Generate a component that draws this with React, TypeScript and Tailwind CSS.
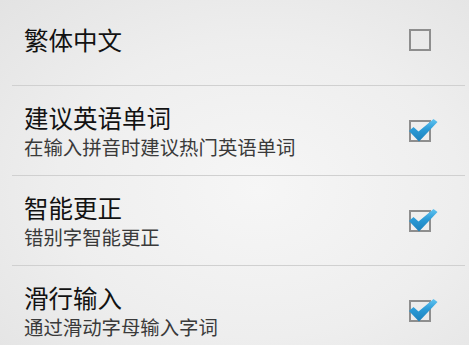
import React from "react";

type Item = { title: string; sub?: string; checked: boolean };

const items: Item[] = [
  { title: "繁体中文", checked: false },
  { title: "建议英语单词", sub: "在输入拼音时建议热门英语单词", checked: true },
  { title: "智能更正", sub: "错别字智能更正", checked: true },
  { title: "滑行输入", sub: "通过滑动字母输入字词", checked: true },
];

function Box({ checked }: { checked: boolean }) {
  return (
    <div className="relative h-[22px] w-[22px] border-2 border-[#8e8e8e]">
      {checked && (
        <svg
          className="absolute left-[-2px] top-[-3px]"
          width="30"
          height="24"
          viewBox="0 0 30 24"
        >
          <defs>
            <linearGradient id="ck" x1="0" y1="0" x2="0" y2="1">
              <stop offset="0" stopColor="#62c4f0" />
              <stop offset="0.45" stopColor="#2b9bd7" />
              <stop offset="1" stopColor="#1c80bb" />
            </linearGradient>
          </defs>
          <path
            d="M0 12 L4.5 8 L9.5 12.5 L24.5 0 L28.5 3 L10 22.5 Z"
            fill="url(#ck)"
          />
        </svg>
      )}
    </div>
  );
}

export default function App() {
  return (
    <div
      className="h-[345px] w-[469px] overflow-hidden bg-[radial-gradient(ellipse_at_55%_55%,#f6f6f6_0%,#eeeeee_55%,#e3e3e3_100%)]"
      style={{ fontFamily: '"Noto Sans CJK SC", "Noto Sans", sans-serif' }}
    >
      <div className="ml-[12px] mr-[4px] flex flex-col">
        {items.map((it, i) => (
          <div
            key={i}
            className={`flex items-center justify-between border-b border-[#d0d0d0] pl-[12px] pr-[34px] ${
              i === 0 ? "h-[86px] pb-[6px]" : "h-[90px]"
            }`}
          >
            <div className="flex flex-col">
              <div className="text-[24.5px] leading-[32px] text-[#121212]">{it.title}</div>
              {it.sub && (
                <div className="text-[19.4px] leading-[25px] text-[#3a3a3a]">{it.sub}</div>
              )}
            </div>
            <Box checked={it.checked} />
          </div>
        ))}
      </div>
    </div>
  );
}
